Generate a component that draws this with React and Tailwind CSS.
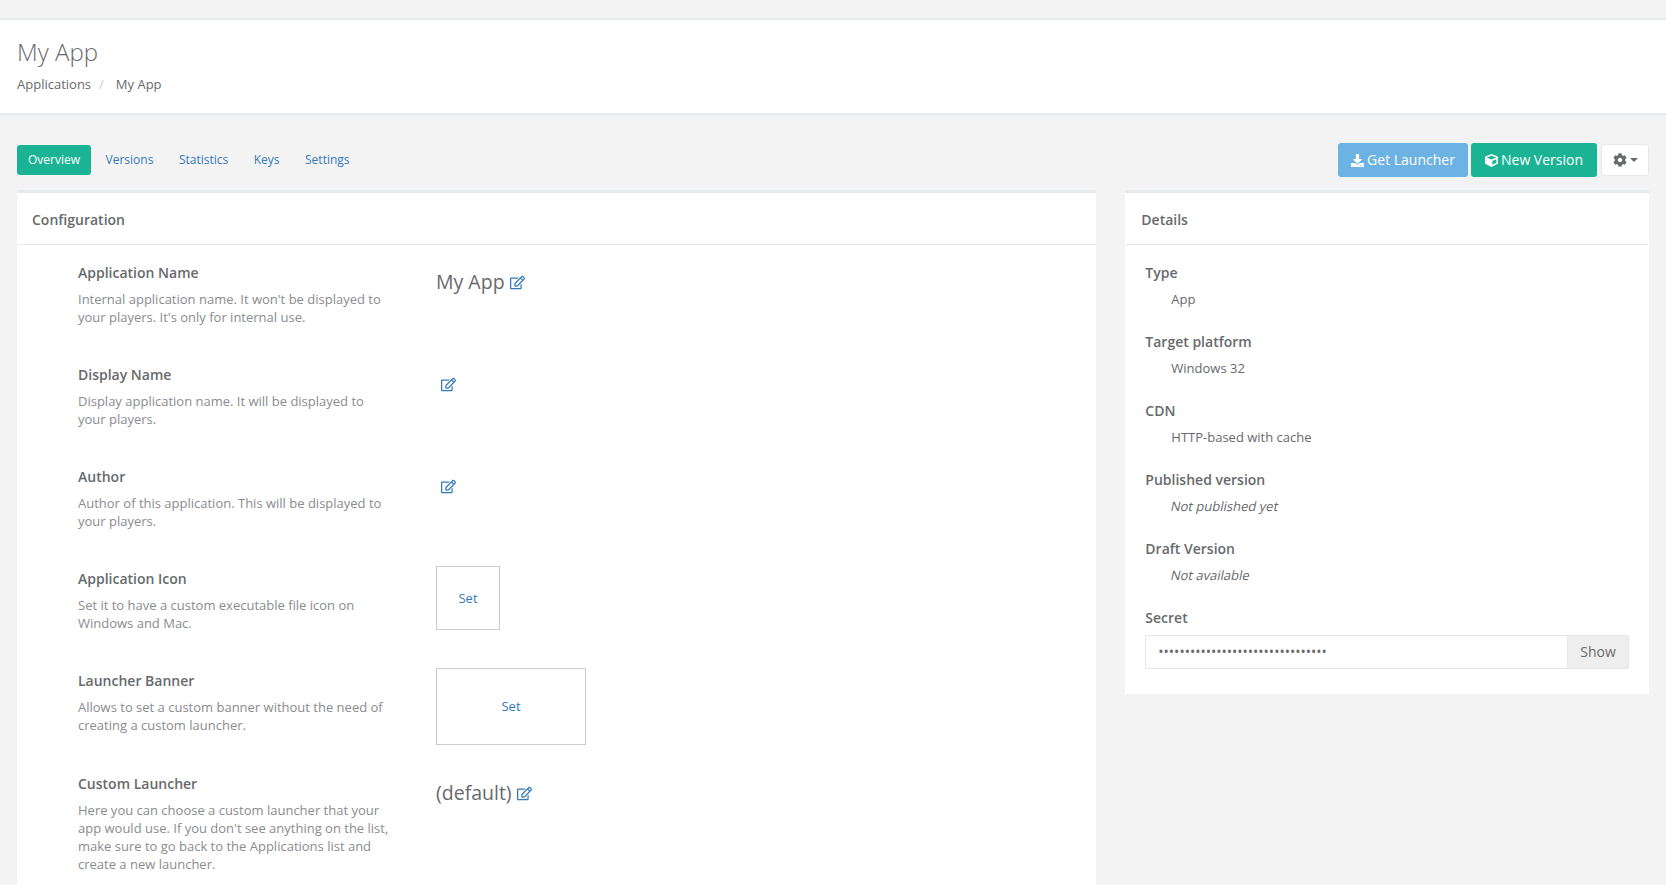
import { FaCog, FaCube, FaDownload, FaRegEdit } from "react-icons/fa";

const configRows = [
  {
    label: "Application Name",
    desc: ["Internal application name. It won't be displayed to", "your players. It's only for internal use."],
    value: "My App",
  },
  {
    label: "Display Name",
    desc: ["Display application name. It will be displayed to", "your players."],
    value: "",
  },
  {
    label: "Author",
    desc: ["Author of this application. This will be displayed to", "your players."],
    value: "",
  },
  {
    label: "Application Icon",
    desc: ["Set it to have a custom executable file icon on", "Windows and Mac."],
    box: "w-16 h-16",
  },
  {
    label: "Launcher Banner",
    desc: ["Allows to set a custom banner without the need of", "creating a custom launcher."],
    box: "w-[150px] h-[77px]",
  },
  {
    label: "Custom Launcher",
    desc: [
      "Here you can choose a custom launcher that your",
      "app would use. If you don't see anything on the list,",
      "make sure to go back to the Applications list and",
      "create a new launcher.",
    ],
    value: "(default)",
  },
];

const details = [
  { label: "Type", value: "App" },
  { label: "Target platform", value: "Windows 32" },
  { label: "CDN", value: "HTTP-based with cache" },
  { label: "Published version", value: "Not published yet", italic: true },
  { label: "Draft Version", value: "Not available", italic: true },
];

function ConfigRow({ row }) {
  return (
    <div className="flex min-h-[76px] mb-[26px]">
      <div className="w-[358px] pl-[61px] pt-1 shrink-0">
        <div className="text-sm font-semibold leading-[18.5px]">{row.label}</div>
        <div className="mt-[7px] text-[13px] leading-[18px] text-[#8a8c8e] whitespace-nowrap">
          {row.desc.map((line) => (
            <div key={line}>{line}</div>
          ))}
        </div>
      </div>
      <div className="pl-[61px]">
        {row.box ? (
          <div className={"flex items-center justify-center pt-px border border-[#ccc] text-[13px] text-[#337ab7] " + row.box}>
            Set
          </div>
        ) : (
          <div className="flex items-center h-[44px] text-[19.5px]">
            <span>{row.value}</span>
            <FaRegEdit className="ml-[5px] text-[15px] text-[#337ab7]" />
          </div>
        )}
      </div>
    </div>
  );
}

function App() {
  return (
    <div className="h-screen overflow-hidden bg-[#f3f3f4] text-[#676a6c] font-['Open_Sans',sans-serif] text-[13px]">
      <div className="h-[18px]"></div>
      <div className="bg-white border-y-2 border-[#e7eaec] pt-[19px] pb-5 px-[17px]">
        <h2 className="text-2xl font-light leading-[26px]">My App</h2>
        <div className="mt-[10px] flex leading-[18px]">
          <span>Applications</span>
          <span className="ml-2 text-[#ccc]">/</span>
          <span className="ml-3">My App</span>
        </div>
      </div>

      <div className="px-[17px]">
        <div className="flex items-center justify-between mt-[28px]">
          <div className="flex items-center gap-[3.5px] text-xs">
            <a className="px-[11px] h-[30px] flex items-center rounded-[3px] bg-[#1ab394] text-white">Overview</a>
            <a className="px-[11px] text-[#337ab7]">Versions</a>
            <a className="px-[11px] text-[#337ab7]">Statistics</a>
            <a className="px-[11px] text-[#337ab7]">Keys</a>
            <a className="px-[11px] text-[#337ab7]">Settings</a>
          </div>
          <div className="flex items-center gap-[3px] text-sm">
            <button className="w-[130px] h-[34px] flex items-center justify-center gap-[3px] rounded-[3px] bg-[#6cb2e3] text-white">
              <FaDownload className="text-[13px]" />
              Get Launcher
            </button>
            <button className="w-[126px] h-[34px] flex items-center justify-center gap-[3px] rounded-[3px] bg-[#1ab394] text-white">
              <FaCube className="text-[13px]" />
              New Version
            </button>
            <button className="ml-[1px] w-12 h-8 flex items-center justify-center gap-[3px] rounded-[3px] border border-[#e7eaec] bg-white">
              <FaCog className="text-[14px]" />
              <span className="border-x-4 border-x-transparent border-t-4 border-t-[#676a6c]"></span>
            </button>
          </div>
        </div>

        <div className="flex gap-[29px] mt-[13px] items-start">
          <div className="w-[1080px] bg-white border-t-[3px] border-[#e7eaec]">
            <div className="h-[52px] pt-[2px] px-[15px] flex items-center border-b border-[#e7eaec] text-sm font-semibold">
              Configuration
            </div>
            <div className="pt-[15px]">
              {configRows.map((row) => (
                <ConfigRow key={row.label} row={row} />
              ))}
            </div>
          </div>

          <div className="w-[524px] bg-white border-t-[3px] border-[#e7eaec]">
            <div className="h-[52px] pt-[2px] px-4 flex items-center border-b border-[#e7eaec] text-sm font-semibold">
              Details
            </div>
            <div className="pt-[19px] px-5 pb-[25px]">
              {details.map((item) => (
                <div key={item.label} className="mb-[24.5px]">
                  <div className="text-sm font-semibold leading-[18.5px]">{item.label}</div>
                  <div className="mt-[7.5px] pl-[26px] leading-[18.5px]">
                    {item.italic ? <span className="inline-block -skew-x-12">{item.value}</span> : item.value}
                  </div>
                </div>
              ))}
              <div className="text-sm font-semibold leading-[18.5px]">Secret</div>
              <div className="flex mt-[7.5px] h-[34px]">
                <input
                  type="password"
                  readOnly
                  value="abcdefghijklmnopqrstuvwxyz012345"
                  className="flex-1 min-w-0 px-3 border border-[#e5e6e7] outline-none text-sm text-[#676a6c]"
                />
                <div className="w-[61px] flex items-center justify-center text-sm bg-[#eee] border border-l-0 border-[#e5e6e7] rounded-r-[3px]">
                  Show
                </div>
              </div>
            </div>
          </div>
        </div>
      </div>
    </div>
  );
}

export default App;
